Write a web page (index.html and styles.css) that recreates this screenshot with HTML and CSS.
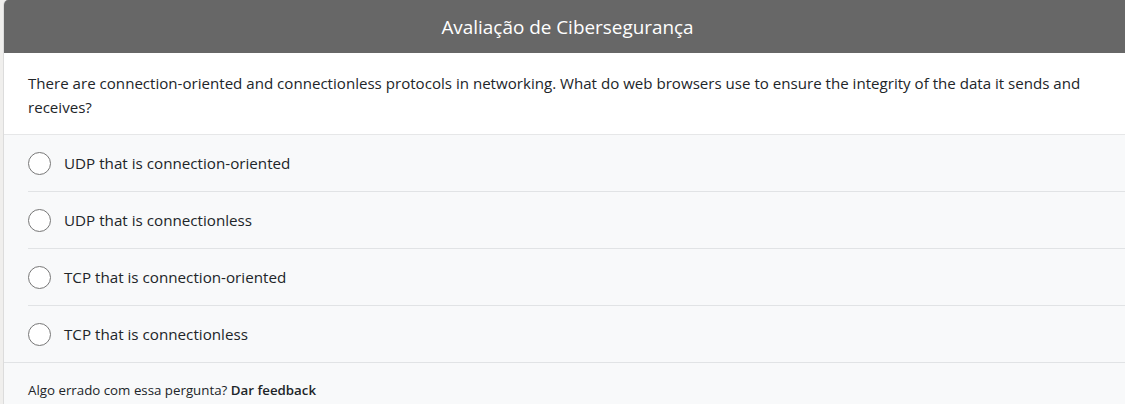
FILE: index.html
```html
<!DOCTYPE html>
<html lang="pt">
<head>
<meta charset="utf-8">
<title>Avaliação de Cibersegurança</title>
<link rel="stylesheet" href="styles.css">
</head>
<body>
<div class="card">
  <div class="card-header">Avaliação de Cibersegurança</div>
  <div class="question">There are connection-oriented and connectionless protocols in networking. What do web browsers use to ensure the integrity of the data it sends and receives?</div>
  <ul class="options">
    <li class="option"><span class="radio"></span><span class="label">UDP that is connection-oriented</span></li>
    <li class="option"><span class="radio"></span><span class="label">UDP that is connectionless</span></li>
    <li class="option"><span class="radio"></span><span class="label">TCP that is connection-oriented</span></li>
    <li class="option"><span class="radio"></span><span class="label">TCP that is connectionless</span></li>
  </ul>
  <div class="footer">Algo errado com essa pergunta? <b>Dar feedback</b></div>
</div>
</body>
</html>
```
FILE: styles.css
```css
html, body {
  margin: 0;
  padding: 0;
  overflow: hidden;
}
body {
  background: #f0efed;
  padding-left: 3px;
  font-family: "Open Sans", "Noto Sans", sans-serif;
  color: #212529;
}
.card {
  width: 1128px;
  height: 420px;
  background: #f8f9fa;
  border-left: 1px solid #dcdcdc;
  border-top-left-radius: 5px;
  overflow: hidden;
  box-sizing: border-box;
}
.card-header {
  height: 53px;
  background: #676767;
  color: #fff;
  font-size: 18.9px;
  display: flex;
  align-items: center;
  justify-content: center;
  padding-top: 1px;
  box-sizing: border-box;
}
.question {
  background: #fff;
  font-size: 15.1px;
  line-height: 24px;
  padding: 18px 22px 15px 24px;
  border-bottom: 1px solid #e6e7e8;
}
.options {
  list-style: none;
  margin: 0;
  padding: 0 0 0 24px;
  border-bottom: 1px solid #e1e3e5;
}
.option {
  height: 56px;
  display: flex;
  align-items: center;
  gap: 13px;
  font-size: 15.2px;
  border-bottom: 1px solid #e1e3e5;
}
.option:last-child {
  border-bottom: none;
}
.radio {
  width: 21px;
  height: 21px;
  border: 1.5px solid #777;
  border-radius: 50%;
  background: #fff;
  flex: none;
}
.footer {
  font-size: 13.3px;
  padding: 18px 24px;
}
.footer b {
  font-weight: 600;
}
```
